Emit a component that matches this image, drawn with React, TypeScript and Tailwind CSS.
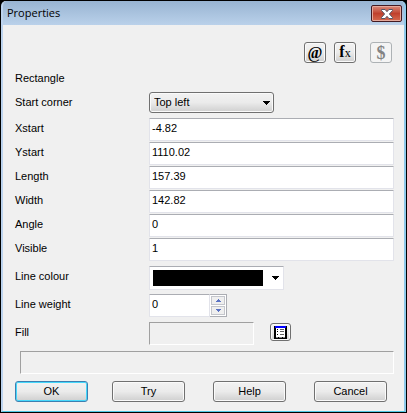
import type { ReactNode } from "react";

const sunken =
  "border border-[#e2e3ea] border-t-[#abadb3] rounded-[1px] bg-white";
const raised =
  "border border-[#707070] rounded-[3px] shadow-[inset_0_0_0_1px_#fafafa] bg-linear-to-b from-[#f2f2f2] from-0% via-[#ebebeb] via-50% to-[#cfcfcf] to-100%";

const fields = [
  { id: "xstart", label: "Xstart", value: "-4.82" },
  { id: "ystart", label: "Ystart", value: "1110.02" },
  { id: "length", label: "Length", value: "157.39" },
  { id: "width", label: "Width", value: "142.82" },
  { id: "angle", label: "Angle", value: "0" },
  { id: "visible", label: "Visible", value: "1" },
];

const Arrow = () => (
  <svg
    className="absolute right-1 top-1/2 -translate-y-1/2 pointer-events-none"
    width="7"
    height="4"
    viewBox="0 0 7 4"
    shapeRendering="crispEdges"
  >
    <path d="M0 0h7v1H6v1H5v1H4v1H3V3H2V2H1V1H0z" />
  </svg>
);

const Row = ({
  id,
  label,
  className,
  children,
}: {
  id: string;
  label: string;
  className: string;
  children: ReactNode;
}) => (
  <div className={`flex items-start ${className}`}>
    <label htmlFor={id} className="w-[134px] shrink-0 pt-1 leading-3">
      {label}
    </label>
    {children}
  </div>
);

const TitleBar = () => (
  <header className="flex items-start justify-between h-6 pl-1 pr-[2px] bg-linear-to-b from-[#98b4d2] to-[#bad1ea]">
    <h1 className="pt-1 font-['Open_Sans',sans-serif] text-[11px] leading-4">
      Properties
    </h1>
    <button
      type="button"
      aria-label="Close"
      className="mt-1 flex items-center justify-center w-[31px] h-[17px] rounded-[2px] border border-[#431a22] shadow-[inset_0_0_0_1px_#e5a99c] bg-linear-to-b from-[#d98a7b] from-0% via-[#c0402d] via-50% to-[#d6694f] to-100%"
    >
      <svg width="12" height="10" viewBox="0 0 12 10">
        <path
          d="M.5 .5h3.600L6 2.700 7.900 .5h3.600v1L8.400 5l3.100 3.500v1H7.900L6 7.300 4.100 9.500H.5v-1L3.600 5 .5 1.500z"
          fill="#fff"
          stroke="#535666"
        />
      </svg>
    </button>
  </header>
);

const Toolbar = () => (
  <div className="flex justify-end pr-[2px] font-['Liberation_Serif',serif] font-bold">
    <button
      type="button"
      aria-label="Attributes"
      className={`w-[22px] h-[21px] text-[16px] leading-4 ${raised}`}
    >
      @
    </button>
    <button
      type="button"
      aria-label="Function"
      className={`ml-2 w-[22px] h-[21px] text-[16px] leading-4 ${raised}`}
    >
      f<span className="text-[12px] font-normal">x</span>
    </button>
    <button
      type="button"
      aria-label="Currency"
      disabled
      className="ml-[14px] w-[22px] h-[21px] text-[18px] leading-4 rounded-[3px] border border-[#adb2b5] bg-[#f4f4f4] text-[#838383]"
    >
      $
    </button>
  </div>
);

const SpinButtons = () => (
  <div className="flex flex-col gap-px p-px w-[17px] border-r border-y border-[#abadb3] bg-white">
    <button
      type="button"
      aria-label="Increase"
      className="flex flex-1 items-center justify-center border border-[#c4c6cc] bg-[#efefef]"
    >
      <svg width="5" height="3" shapeRendering="crispEdges">
        <path d="M2 0h1v1h1v1h1v1H0V2h1V1h1z" fill="#5a73c4" />
      </svg>
    </button>
    <button
      type="button"
      aria-label="Decrease"
      className="flex flex-1 items-center justify-center border border-[#c4c6cc] bg-[#efefef]"
    >
      <svg width="5" height="3" shapeRendering="crispEdges">
        <path d="M0 0h5v1H4v1H3v1H2V2H1V1H0z" fill="#5a73c4" />
      </svg>
    </button>
  </div>
);

const ListIcon = () => (
  <svg width="13" height="13" viewBox="0 0 13 13" shapeRendering="crispEdges">
    <path d="M0 0h13v13H0z" />
    <path d="M1 0h11v2H1z" fill="#0000ff" />
    <path d="M2 2h9v9H2z" fill="#fff" />
    <path d="M3 3h1v1H3zM3 5h1v1H3zM3 8h1v1H3z" fill="#000" />
    <path d="M6 3h4v1H6zM6 5h4v1H6zM6 8h4v1H6z" fill="#606060" />
    <path d="M2 11h2v1H2zM5 11h3v1H5zM9 11h2v1H9z" fill="#808080" />
  </svg>
);

const App = () => {
  return (
    <div className="min-h-screen flex bg-black">
      <main className="flex-1 flex flex-col m-px rounded-t-[5px] border-x-2 border-b border-l-[#bcd3ee] border-r-[#8fc9ea] border-b-[#4fc8e4] overflow-hidden bg-[#f0f0f0] text-black font-['Liberation_Sans',sans-serif] text-[11px]">
        <TitleBar />
        <form className="flex flex-1 flex-col pt-[17px] pl-3 pr-[10px]">
          <Toolbar />
          <h2 className="mt-[9px] leading-3">Rectangle</h2>

          <Row id="corner" label="Start corner" className="mt-2 h-[26px]">
            <div className="relative w-[125px]">
              <select
                id="corner"
                className={`block w-full h-[21px] pl-1 appearance-none ${raised}`}
              >
                <option>Top left</option>
              </select>
              <Arrow />
            </div>
          </Row>

          {fields.map((field) => (
            <Row
              key={field.id}
              id={field.id}
              label={field.label}
              className="h-6"
            >
              <input
                id={field.id}
                type="text"
                defaultValue={field.value}
                className={`flex-1 min-w-0 h-[23px] px-[2px] pb-1 leading-4 ${sunken}`}
              />
            </Row>
          ))}

          <Row id="colour" label="Line colour" className="mt-1 h-7">
            <div className={`relative w-[135px] h-6 ${sunken}`}>
              <select
                id="colour"
                className="block w-full h-full py-[3px] pl-[3px] pr-5 appearance-none bg-black bg-clip-content"
              >
                <option>Black</option>
              </select>
              <Arrow />
            </div>
          </Row>

          <Row id="weight" label="Line weight" className="h-7">
            <div className="flex w-[78px] h-[23px]">
              <input
                id="weight"
                type="text"
                defaultValue="0"
                className={`flex-1 min-w-0 px-[2px] pb-1 leading-4 ${sunken}`}
              />
              <SpinButtons />
            </div>
          </Row>

          <Row id="fill" label="Fill" className="h-[29px]">
            <input
              id="fill"
              type="text"
              readOnly
              className="w-[105px] h-[23px] border border-[#a0a0a0] border-r-white border-b-white"
            />
            <button
              type="button"
              aria-label="Choose fill"
              className={`ml-4 mt-px flex items-center justify-center w-[21px] h-[18px] ${raised}`}
            >
              <ListIcon />
            </button>
          </Row>

          <output className="ml-[5px] h-[23px] border border-[#a0a0a0] border-r-white border-b-white" />

          <div className="flex gap-7 mt-[7px] pb-[9px]">
            <div className="flex gap-6">
              <button
                type="submit"
                className="w-[73px] h-[21px] rounded-[3px] border border-[#3c7fb1] shadow-[inset_0_0_0_1px_#46d8fb] bg-linear-to-b from-[#f2f2f2] from-0% via-[#ebebeb] via-50% to-[#cfcfcf] to-100%"
              >
                OK
              </button>
              <button type="button" className={`w-[73px] h-[21px] ${raised}`}>
                Try
              </button>
            </div>
            <button type="button" className={`w-[73px] h-[21px] ${raised}`}>
              Help
            </button>
            <button type="button" className={`w-[73px] h-[21px] ${raised}`}>
              Cancel
            </button>
          </div>
        </form>
      </main>
    </div>
  );
};

export default App;
